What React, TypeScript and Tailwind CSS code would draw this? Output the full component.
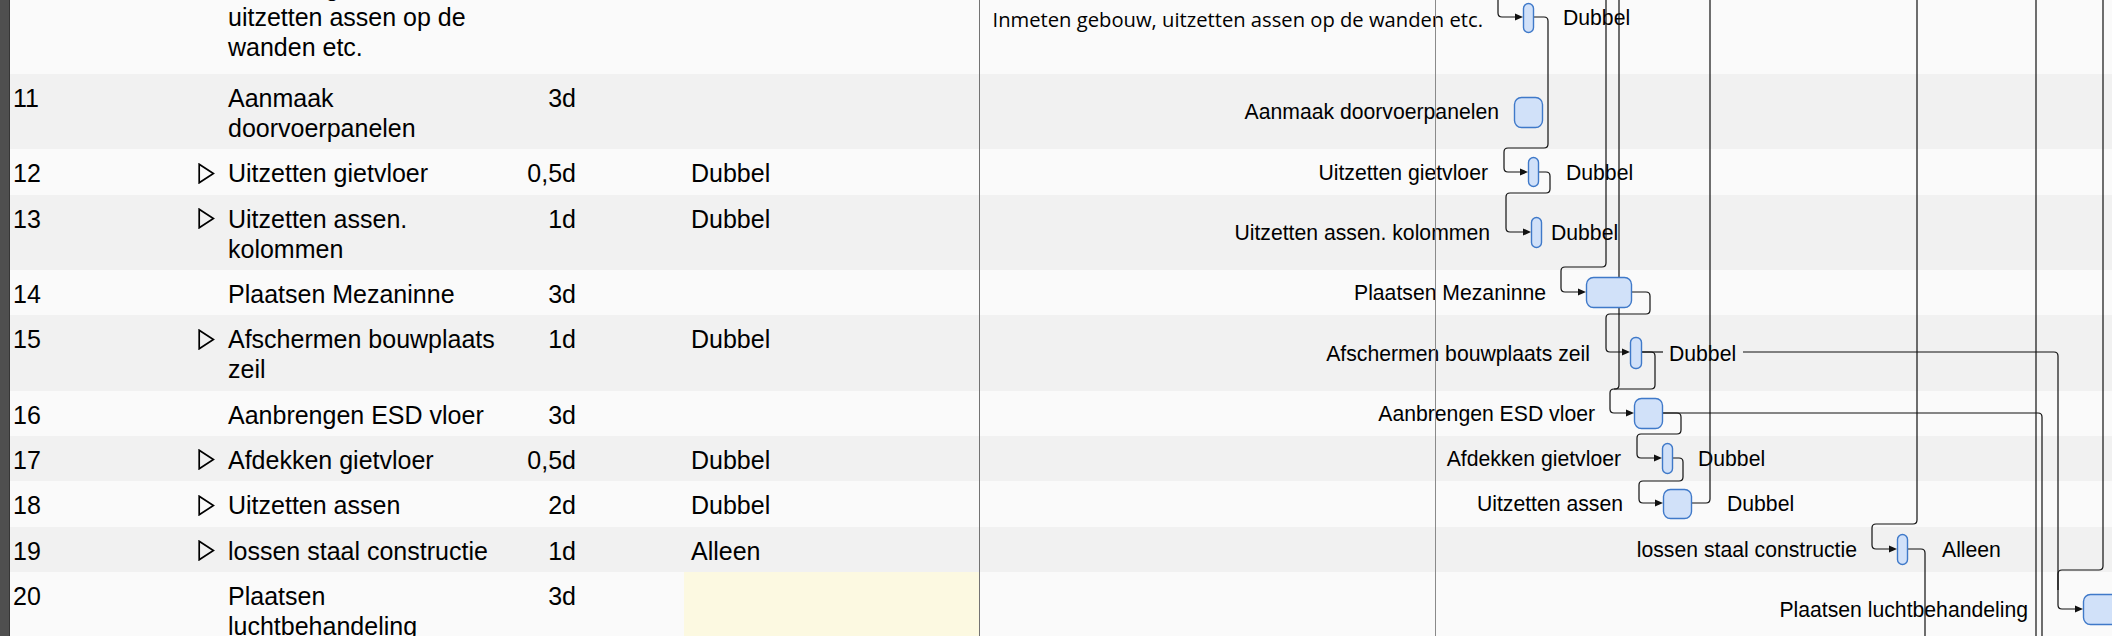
import React from 'react';

type Row = {
  n: string;
  tri: boolean;
  name: string[];
  dur: string;
  res: string;
  dark: boolean;
  yellow?: boolean;
  first?: boolean;
};

const rows: Row[] = [
  { n: '10', tri: true, name: ['Inmeten gebouw,', 'uitzetten assen op de', 'wanden etc.'], dur: '', res: 'Dubbel', dark: false, first: true },
  { n: '11', tri: false, name: ['Aanmaak', 'doorvoerpanelen'], dur: '3d', res: '', dark: true },
  { n: '12', tri: true, name: ['Uitzetten gietvloer'], dur: '0,5d', res: 'Dubbel', dark: false },
  { n: '13', tri: true, name: ['Uitzetten assen.', 'kolommen'], dur: '1d', res: 'Dubbel', dark: true },
  { n: '14', tri: false, name: ['Plaatsen Mezaninne'], dur: '3d', res: '', dark: false },
  { n: '15', tri: true, name: ['Afschermen bouwplaats', 'zeil'], dur: '1d', res: 'Dubbel', dark: true },
  { n: '16', tri: false, name: ['Aanbrengen ESD vloer'], dur: '3d', res: '', dark: false },
  { n: '17', tri: true, name: ['Afdekken gietvloer'], dur: '0,5d', res: 'Dubbel', dark: true },
  { n: '18', tri: true, name: ['Uitzetten assen'], dur: '2d', res: 'Dubbel', dark: false },
  { n: '19', tri: true, name: ['lossen staal constructie'], dur: '1d', res: 'Alleen', dark: true },
  { n: '20', tri: false, name: ['Plaatsen', 'luchtbehandeling'], dur: '3d', res: '', dark: false, yellow: true },
];

type Pt = [number, number];

function roundedPath(pts: Pt[], r = 4): string {
  let d = `M ${pts[0][0]} ${pts[0][1]}`;
  for (let i = 1; i < pts.length - 1; i++) {
    const [x0, y0] = pts[i - 1];
    const [x1, y1] = pts[i];
    const [x2, y2] = pts[i + 1];
    const d1 = Math.hypot(x1 - x0, y1 - y0);
    const d2 = Math.hypot(x2 - x1, y2 - y1);
    const rr = Math.min(r, d1 / 2, d2 / 2);
    const ax = x1 - ((x1 - x0) / d1) * rr;
    const ay = y1 - ((y1 - y0) / d1) * rr;
    const bx = x1 + ((x2 - x1) / d2) * rr;
    const by = y1 + ((y2 - y1) / d2) * rr;
    d += ` L ${ax} ${ay} Q ${x1} ${y1} ${bx} ${by}`;
  }
  const last = pts[pts.length - 1];
  d += ` L ${last[0]} ${last[1]}`;
  return d;
}

type Conn = { pts: Pt[]; arrow?: boolean };

const AL = 8;

const conns: Conn[] = [
  { pts: [[1498, 0], [1498, 17], [1523, 17]], arrow: true },
  { pts: [[1533, 17], [1548, 17], [1548, 148], [1504, 148], [1504, 172], [1528, 172]], arrow: true },
  { pts: [[1538, 172], [1550, 172], [1550, 193], [1506, 193], [1506, 232], [1531, 232]], arrow: true },
  { pts: [[1606, 0], [1606, 267], [1561, 267], [1561, 292], [1586, 292]], arrow: true },
  { pts: [[1619, 0], [1619, 389], [1610, 389], [1610, 413], [1634, 413]], arrow: true },
  { pts: [[1631, 292], [1650, 292], [1650, 314], [1606, 314], [1606, 352], [1630, 352]], arrow: true },
  { pts: [[1641, 352], [1655, 352], [1655, 389], [1614, 389]] },
  { pts: [[1641, 352], [1663, 352]] },
  { pts: [[1743, 352], [2058, 352], [2058, 609], [2083, 609]], arrow: true },
  { pts: [[2103, 0], [2103, 570], [2058, 570], [2058, 590]] },
  { pts: [[1662, 413], [2042, 413], [2042, 636]] },
  { pts: [[1662, 413], [1681, 413], [1681, 434], [1637, 434], [1637, 458], [1662, 458]], arrow: true },
  { pts: [[1672, 458], [1683, 458], [1683, 481], [1639, 481], [1639, 503], [1663, 503]], arrow: true },
  { pts: [[1691, 503], [1710, 503], [1710, 0]] },
  { pts: [[1917, 0], [1917, 524], [1872, 524], [1872, 549], [1897, 549]], arrow: true },
  { pts: [[1907, 549], [1925, 549], [1925, 636]] },
  { pts: [[2036, 0], [2036, 636]] },
];

type Bar = { x: number; y: number; w: number; h: number; r: number };

const bars: Bar[] = [
  { x: 1523, y: 3, w: 10, h: 29, r: 5 },
  { x: 1514, y: 97, w: 28, h: 30, r: 7 },
  { x: 1528, y: 157, w: 10, h: 29, r: 5 },
  { x: 1531, y: 217, w: 10, h: 30, r: 5 },
  { x: 1586, y: 277, w: 45, h: 30, r: 7 },
  { x: 1630, y: 337, w: 11, h: 31, r: 5 },
  { x: 1634, y: 398, w: 28, h: 30, r: 7 },
  { x: 1662, y: 443, w: 10, h: 30, r: 5 },
  { x: 1663, y: 489, w: 28, h: 29, r: 7 },
  { x: 1897, y: 534, w: 10, h: 30, r: 5 },
  { x: 2083, y: 594, w: 45, h: 30, r: 7 },
];

type Label = { t: string; x: number; y: number; end?: boolean; calibri?: boolean };

const labels: Label[] = [
  { t: 'Inmeten gebouw, uitzetten assen op de wanden etc.', x: 1483, y: 27, end: true, calibri: true },
  { t: 'Dubbel', x: 1563, y: 25 },
  { t: 'Aanmaak doorvoerpanelen', x: 1499, y: 119, end: true },
  { t: 'Uitzetten gietvloer', x: 1488, y: 180, end: true },
  { t: 'Dubbel', x: 1566, y: 180 },
  { t: 'Uitzetten assen. kolommen', x: 1490, y: 240, end: true },
  { t: 'Dubbel', x: 1551, y: 240 },
  { t: 'Plaatsen Mezaninne', x: 1546, y: 300, end: true },
  { t: 'Afschermen bouwplaats zeil', x: 1590, y: 361, end: true },
  { t: 'Dubbel', x: 1669, y: 361 },
  { t: 'Aanbrengen ESD vloer', x: 1595, y: 421, end: true },
  { t: 'Afdekken gietvloer', x: 1621, y: 466, end: true },
  { t: 'Dubbel', x: 1698, y: 466 },
  { t: 'Uitzetten assen', x: 1623, y: 511, end: true },
  { t: 'Dubbel', x: 1727, y: 511 },
  { t: 'lossen staal constructie', x: 1857, y: 557, end: true },
  { t: 'Alleen', x: 1942, y: 557 },
  { t: 'Plaatsen luchtbehandeling', x: 2028, y: 617, end: true },
];

function Triangle() {
  return (
    <svg width="17" height="21" viewBox="0 0 17 21" className="block">
      <polygon points="1.2,1.2 15.4,10.5 1.2,19.8" fill="none" stroke="#000" strokeWidth="1.7" strokeLinejoin="miter" />
    </svg>
  );
}

function Gantt() {
  return (
    <svg
      className="absolute left-[981px] top-0"
      width={1131}
      height={636}
      viewBox="981 0 1131 636"
    >
      {labels.map((l, i) => (
        <text
          key={i}
          x={l.x}
          y={l.y}
          textAnchor={l.end ? 'end' : 'start'}
          fontSize={l.calibri ? 20.2 : 21.2}
          fontFamily={l.calibri ? '"Open Sans", Lato, sans-serif' : '"Liberation Sans", Arial, sans-serif'}
          fill="#000"
        >
          {l.t}
        </text>
      ))}
      <line x1={1435.5} y1={0} x2={1435.5} y2={636} stroke="#8a8a8a" strokeWidth={1} />
      {conns.map((c, i) => {
        const pts = c.pts.slice();
        let tip: Pt | null = null;
        if (c.arrow) {
          tip = pts[pts.length - 1];
          pts[pts.length - 1] = [tip[0] - AL + 1, tip[1]];
        }
        return (
          <g key={i}>
            <path d={roundedPath(pts, 4)} fill="none" stroke="#111" strokeWidth={1.2} />
            {tip && (
              <polygon
                points={`${tip[0]},${tip[1]} ${tip[0] - AL},${tip[1] - 3.6} ${tip[0] - AL},${tip[1] + 3.6}`}
                fill="#111"
              />
            )}
          </g>
        );
      })}
      {bars.map((b, i) => (
        <rect
          key={i}
          x={b.x + 0.5}
          y={b.y + 0.5}
          width={b.w}
          height={b.h}
          rx={b.r}
          ry={b.r}
          fill="#d1e1f9"
          stroke="#3f79c9"
          strokeWidth={1.4}
        />
      ))}
    </svg>
  );
}

export default function App() {
  return (
    <div className="relative flex h-[636px] w-[2112px] overflow-hidden bg-[#fafafa] text-black [font-family:'Liberation_Sans',Arial,sans-serif]">
      <div className="h-full w-[10px] shrink-0 border-r border-[#363636] bg-[#4f4f4f]" />
      <div className="mt-[-37px] flex min-w-0 flex-1 flex-col">
        {rows.map((r) => {
          const pad = `pt-[9px] ${r.first ? 'pb-[12px]' : 'pb-[6.33px]'}`;
          return (
            <div
              key={r.n}
              className={`flex text-[25px] leading-[30px] ${r.dark ? 'bg-[#f1f1f1]' : 'bg-[#fafafa]'}`}
            >
              <div className={`w-[179px] shrink-0 pl-[3px] ${pad}`}>{r.n}</div>
              <div className={`w-[39px] shrink-0 pl-[9px] ${pad}`}>
                {r.tri && (
                  <div className="flex h-[30px] items-center">
                    <Triangle />
                  </div>
                )}
              </div>
              <div className={`w-[286px] shrink-0 whitespace-nowrap ${pad}`}>
                {r.name.map((line, i) => (
                  <div key={i}>{line}</div>
                ))}
              </div>
              <div className={`w-[62px] shrink-0 whitespace-nowrap text-right ${pad}`}>{r.dur}</div>
              <div className="w-[108px] shrink-0" />
              <div className={`w-[295px] shrink-0 pl-[7px] ${pad} ${r.yellow ? 'bg-[#fcf9e1]' : ''}`}>
                {r.res}
              </div>
              <div className="flex-1 border-l border-[#737373]" />
            </div>
          );
        })}
      </div>
      <Gantt />
    </div>
  );
}
